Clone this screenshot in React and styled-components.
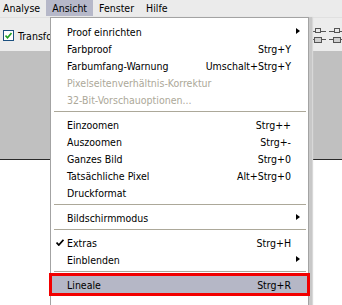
import React from "react";
import styled, { createGlobalStyle } from "styled-components";

const GlobalStyle = createGlobalStyle`
  html, body {
    margin: 0;
    padding: 0;
    background: #fff;
  }
  body {
    font-family: "DejaVu Sans Condensed", "DejaVu Sans", "Liberation Sans", sans-serif;
    font-size: 10.5px;
    color: #000;
  }
`;

const Page = styled.div`
  position: relative;
  width: 342px;
  height: 305px;
  overflow: hidden;
  background: #fff;
`;

const MenuBar = styled.div`
  display: flex;
  height: 17px;
  margin-left: -3px;
  background: #ebebeb;
`;

const BarItem = styled.div`
  display: flex;
  align-items: center;
  height: 16px;
  padding: 0 6px;
  background: ${(p) => (p.$open ? "#b6b8c9" : "transparent")};
`;

const Toolbar = styled.div`
  display: flex;
  align-items: center;
  justify-content: space-between;
  height: 33px;
  padding: 0 0 0 3px;
  background: #ececec;
  border-top: 1px solid #e0e0e0;
`;

const CheckWrap = styled.label`
  display: flex;
  align-items: center;
  gap: 4px;
  width: 47px;
  margin-top: 2px;
  overflow: hidden;
  white-space: nowrap;
`;

const CheckBox = styled.span`
  display: flex;
  flex: none;
  align-items: center;
  justify-content: center;
  width: 9px;
  height: 9px;
  border: 1px solid #1c5180;
  background: #fff;
`;

const ToolIcons = styled.div`
  display: flex;
  gap: 3px;
  margin-right: -3px;
  margin-top: 2px;
`;

const Workspace = styled.div`
  height: 108px;
  background: #c0c0c0;
  border-bottom: 1px solid #2a2a2a;
`;

const Menu = styled.div`
  position: absolute;
  top: 17px;
  left: 50px;
  width: 257px;
  height: 300px;
  padding-top: 5px;
  background: #fff;
  border: 1px solid #a3a3a3;
  box-shadow: 3px 0 0 #c8c8c8, 4px 0 1px #d8d8d8;
`;

const Row = styled.div`
  position: relative;
  display: flex;
  align-items: center;
  justify-content: space-between;
  height: 17px;
  margin: 0 1px;
  padding: 0 16px 0 15px;
  color: ${(p) => (p.$disabled ? "#aca899" : "#000")};
  background: ${(p) => (p.$active ? "#b5b7c6" : "transparent")};
  outline: ${(p) => (p.$active ? "3px solid #f20000" : "none")};
  white-space: nowrap;
`;

const Shortcut = styled.span`
  text-align: right;
`;

const Separator = styled.div`
  height: 1px;
  margin: 3px 2px 4px 3px;
  background: #aca899;
`;

const Marker = styled.span`
  position: absolute;
  left: 4px;
  top: 5px;
  display: flex;
`;

const Arrow = styled.span`
  position: absolute;
  right: 7px;
  top: 5px;
  width: 0;
  height: 0;
  border-top: 3.5px solid transparent;
  border-bottom: 3.5px solid transparent;
  border-left: 4px solid #000;
`;

const groups = [
  [
    { label: "Proof einrichten", sub: true },
    { label: "Farbproof", key: "Strg+Y" },
    { label: "Farbumfang-Warnung", key: "Umschalt+Strg+Y" },
    { label: "Pixelseitenverhältnis-Korrektur", disabled: true },
    { label: "32-Bit-Vorschauoptionen...", disabled: true },
  ],
  [
    { label: "Einzoomen", key: "Strg++" },
    { label: "Auszoomen", key: "Strg+-" },
    { label: "Ganzes Bild", key: "Strg+0" },
    { label: "Tatsächliche Pixel", key: "Alt+Strg+0" },
    { label: "Druckformat" },
  ],
  [{ label: "Bildschirmmodus", sub: true }],
  [
    { label: "Extras", key: "Strg+H", checked: true },
    { label: "Einblenden", sub: true },
  ],
  [{ label: "Lineale", key: "Strg+R", active: true }],
];

const CheckMark = () => (
  <svg width="8" height="7" viewBox="0 0 8 7">
    <path d="M0.5 3.5 L2.8 6 L7.5 0.8" fill="none" stroke="#000" strokeWidth="1.8" />
  </svg>
);

const DistIcon = () => (
  <svg width="16" height="15" viewBox="0 0 16 15">
    <line x1="0" y1="3.5" x2="16" y2="3.5" stroke="#555" />
    <rect x="5.5" y="0.5" width="5" height="4" fill="#e8e8e8" stroke="#555" />
    <line x1="0" y1="11.5" x2="16" y2="11.5" stroke="#555" />
    <rect x="4.5" y="9.5" width="7" height="5" fill="#d0d0d0" stroke="#555" />
  </svg>
);

const App = () => (
  <Page>
    <GlobalStyle />
    <MenuBar>
      <BarItem>Analyse</BarItem>
      <BarItem $open>Ansicht</BarItem>
      <BarItem>Fenster</BarItem>
      <BarItem>Hilfe</BarItem>
    </MenuBar>
    <Toolbar>
      <CheckWrap>
        <CheckBox>
          <svg width="7" height="7" viewBox="0 0 7 7">
            <path d="M0.5 3.5 L2.5 5.8 L6.5 1" fill="none" stroke="#21a121" strokeWidth="1.6" />
          </svg>
        </CheckBox>
        Transfo
      </CheckWrap>
      <ToolIcons>
        <DistIcon />
        <DistIcon />
      </ToolIcons>
    </Toolbar>
    <Workspace />
    <Menu>
      {groups.map((group, gi) => (
        <React.Fragment key={gi}>
          {gi > 0 && <Separator />}
          {group.map((item) => (
            <Row key={item.label} $disabled={item.disabled} $active={item.active}>
              {item.checked && (
                <Marker>
                  <CheckMark />
                </Marker>
              )}
              <span>{item.label}</span>
              {item.key && <Shortcut>{item.key}</Shortcut>}
              {item.sub && <Arrow />}
            </Row>
          ))}
        </React.Fragment>
      ))}
    </Menu>
  </Page>
);

export default App;
